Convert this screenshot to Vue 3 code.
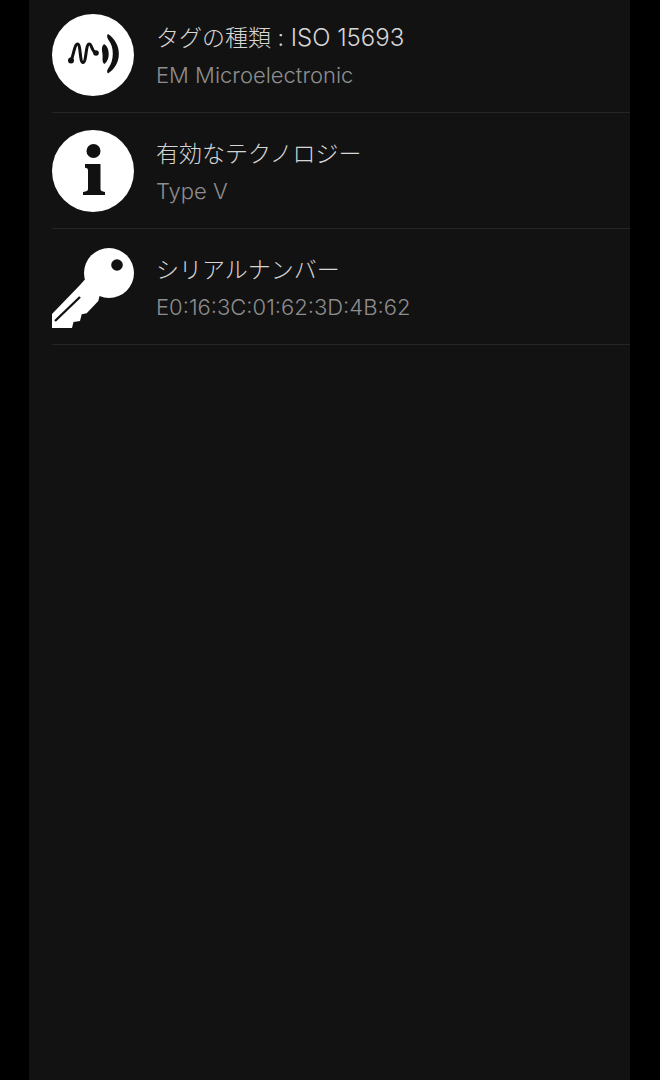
<template>
  <main class="screen">
    <ul class="info-list">
      <li v-for="row in rows" :key="row.title" class="info-row">
        <svg class="icon" viewBox="0 0 82 82" aria-hidden="true">
          <template v-if="row.icon === 'tag'">
            <circle cx="41" cy="41" r="41" fill="#fff" />
            <path class="wave" d="M19 46.5C21.5 42 22.5 30 25.5 30C29 30 27.5 48.5 31 48.5C34.5 48.5 33.5 30 37.2 30C40 30 39.5 37.5 44 39" />
            <circle cx="19" cy="46.5" r="3" fill="#111" />
            <circle cx="44" cy="39" r="2.8" fill="#111" />
            <path d="M52 30C58 33 58.5 46 52.5 50C49.5 48 51 44 50.5 40C50 36 49 33 52 30Z" fill="#111" />
            <path d="M56 20C70 29 71 50 56 59.5C54.5 58 55 56 56.5 54C62 47 62.5 33 56.5 26C55 24 54.5 21 56 20Z" fill="#111" />
          </template>
          <template v-else-if="row.icon === 'info'">
            <circle cx="41" cy="41" r="41" fill="#fff" />
            <circle cx="41.5" cy="21" r="7" fill="#111" />
            <path d="M33 34H48.5V59C48.5 61 50 61.5 53 62V65H31V62C34.5 61.5 36 61 36 59V40.5C36 38.5 35 38 33 37.7Z" fill="#111" />
          </template>
          <template v-else>
            <circle cx="57" cy="27" r="25" fill="#fff" />
            <path d="M28 39L0 68V82H20L21.5 76L28 75L29.7 68.3L34.7 67.3L46.3 55L50 40L36 30Z" fill="#fff" />
            <circle cx="65" cy="19" r="5.8" fill="#111" />
            <path d="M28 51L3 75" stroke="#111" stroke-width="2.4" fill="none" />
          </template>
        </svg>
        <div class="texts">
          <div class="title">{{ row.title }}<span v-if="row.latin" class="latin">{{ row.latin }}</span></div>
          <div class="sub">{{ row.sub }}</div>
        </div>
      </li>
    </ul>
  </main>
</template>

<script setup>
const rows = [
  { icon: 'tag', title: 'タグの種類 :', latin: ' ISO 15693', sub: 'EM Microelectronic' },
  { icon: 'info', title: '有効なテクノロジー', sub: 'Type V' },
  { icon: 'key', title: 'シリアルナンバー', sub: 'E0:16:3C:01:62:3D:4B:62' }
]
</script>

<style scoped>
.screen {
  width: 601px;
  height: 1080px;
  margin-left: 29px;
  background: #121212;
  overflow: hidden;
  font-family: Inter, "Noto Sans CJK JP", sans-serif;
  font-weight: 300;
}

.info-list {
  list-style: none;
  margin: -3px 0 0;
  padding: 0 0 0 23px;
}

.info-row {
  display: flex;
  align-items: center;
  gap: 22px;
  height: 116px;
  box-sizing: border-box;
  border-bottom: 1px solid #262626;
}

.icon {
  width: 82px;
  height: 82px;
  flex: none;
}

.wave {
  fill: none;
  stroke: #111;
  stroke-width: 3;
  stroke-linecap: round;
}

.texts {
  display: flex;
  flex-direction: column;
  gap: 9px;
  padding-top: 3px;
}

.title {
  font-size: 23px;
  line-height: 28px;
  color: #d6d6d6;
  white-space: pre;
}

.latin {
  font-size: 24px;
}

.sub {
  font-size: 22px;
  line-height: 28px;
  color: #8e8e8e;
}
</style>

<style>
html,
body {
  background: #000;
  overflow: hidden;
}
</style>
